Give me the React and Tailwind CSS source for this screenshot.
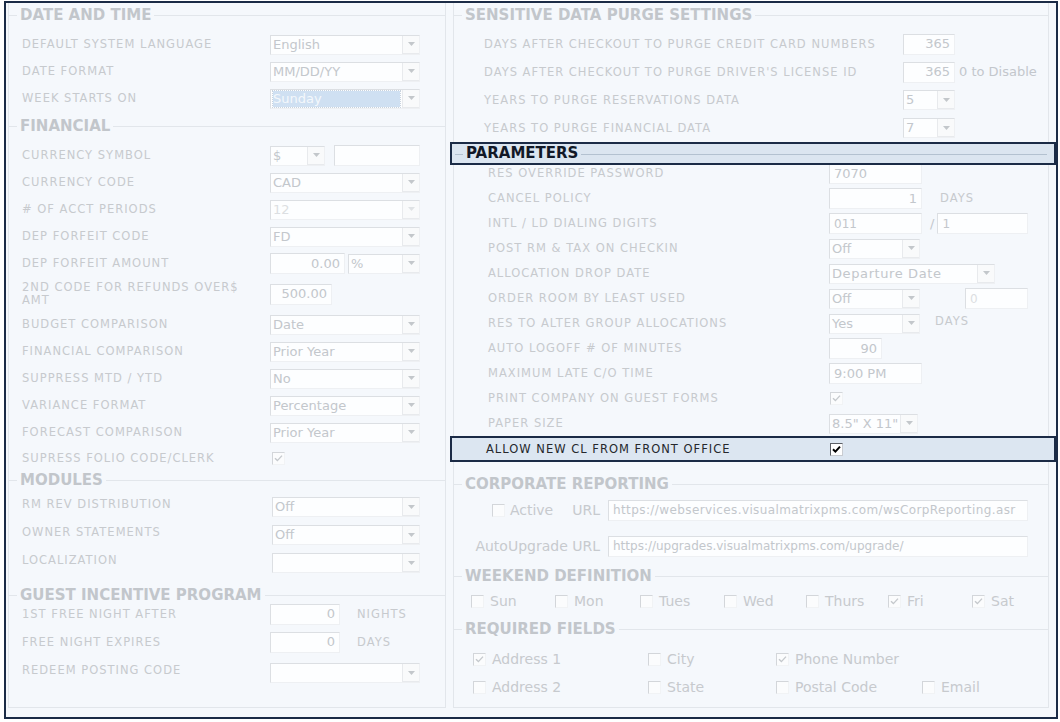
import React from "react";

const LINE = "border-[#e2e6eb]";

function Legend({ title, className = "h-[24px]", dark }) {
  return (
    <div className={`flex ${className}`}>
      <div className={`h-1/2 w-[8px] self-end border-t ${dark ? "border-[#b3c1d0]" : LINE}`} />
      <span
        className={`self-center px-[3px] text-[15px] font-bold leading-none ${
          dark ? "text-[#111827]" : "text-[#c2c6cb]"
        }`}
      >
        {title}
      </span>
      <div className={`h-1/2 flex-1 self-end border-t ${dark ? "border-[#b3c1d0]" : LINE}`} />
    </div>
  );
}

function Label({ children, className = "" }) {
  return (
    <div className={`text-[11.5px] leading-[13px] tracking-[1px] text-[#c7cace] ${className}`}>
      {children}
    </div>
  );
}

function Arrow({ light }) {
  return (
    <svg width="7" height="4" viewBox="0 0 7 4">
      <polygon points="0,0 7,0 3.5,4" fill={light ? "#dfe2e5" : "#c3c7cb"} />
    </svg>
  );
}

function Select({ value, w = "w-[150px]", selected, disabled, wide }) {
  return (
    <div
      className={`${w} flex h-[20px] border border-t-[#dcdfe3] border-l-[#dcdfe3] border-r-[#eef0f3] border-b-[#eef0f3] bg-[#fdfeff]`}
    >
      <div className="flex min-w-0 flex-1 items-center overflow-hidden px-[2px]">
        <span
          className={`whitespace-nowrap text-[13px] leading-[16px] ${wide ? "tracking-[0.6px]" : ""} ${
            selected
              ? "w-full bg-[#cfe0f2] text-[#f4f8fc] outline-1 outline-dotted outline-[#c9d3de]"
              : disabled
              ? "text-[#dcdfe2]"
              : "text-[#c3c7cc]"
          }`}
        >
          {value}
        </span>
      </div>
      <div className="flex w-[17px] shrink-0 items-center justify-center border-b border-l border-[#e8eaed] bg-[#f9fafb]">
        <Arrow light={disabled} />
      </div>
    </div>
  );
}

function Input({ value, w = "w-[93px]", right, disabled, small, wide }) {
  return (
    <div
      className={`${w} flex h-[21px] items-center overflow-hidden border border-t-[#dcdfe3] border-l-[#dcdfe3] border-r-[#eef0f3] border-b-[#eef0f3] bg-[#fdfeff] px-[4px] ${
        right ? "justify-end" : ""
      }`}
    >
      <span
        className={`whitespace-nowrap ${small ? "text-[12px]" : "text-[13px]"} ${
          wide ? "tracking-[0.4px]" : ""
        } leading-[16px] ${disabled ? "text-[#dcdfe2]" : "text-[#c3c7cc]"}`}
      >
        {value}
      </span>
    </div>
  );
}

function Check({ checked, dark }) {
  return (
    <span
      className={`flex h-[13px] w-[13px] shrink-0 items-center justify-center border ${
        dark
          ? "border-t-[#5b5f66] border-l-[#5b5f66] border-r-[#c9ccd1] border-b-[#c9ccd1] bg-white"
          : "border-t-[#d3d6da] border-l-[#d3d6da] border-r-[#f1f3f5] border-b-[#f1f3f5] bg-[#fbfcfd]"
      }`}
    >
      {checked && (
        <svg width="9" height="9" viewBox="0 0 9 9">
          <path
            d="M1 4.2 L3.4 6.6 L8 1.6"
            fill="none"
            stroke={dark ? "#000000" : "#c5c9cd"}
            strokeWidth={dark ? "2" : "1.4"}
          />
        </svg>
      )}
    </span>
  );
}

function Row({ label, children, h = "h-[27px]" }) {
  return (
    <div className={`flex items-center ${h}`}>
      <div className="w-[261px] shrink-0 pl-[13px]">
        <Label>{label}</Label>
      </div>
      <div className="flex items-center">{children}</div>
    </div>
  );
}

function PurgeRow({ label, children }) {
  return (
    <div className="flex h-[28px] items-center">
      <div className="w-[449px] shrink-0 pl-[30px]">
        <Label>{label}</Label>
      </div>
      <div className="flex items-center">{children}</div>
    </div>
  );
}

function ParamRow({ label, children }) {
  return (
    <div className="flex h-[25px] items-center">
      <div className="w-[375px] shrink-0 pl-[34px]">
        <Label>{label}</Label>
      </div>
      <div className="flex items-center">{children}</div>
    </div>
  );
}

function CheckItem({ label, checked, w }) {
  return (
    <div className={`flex items-center gap-[6px] ${w}`}>
      <Check checked={checked} />
      <span className="text-[14px] leading-none text-[#c7cace]">{label}</span>
    </div>
  );
}

function LeftColumn() {
  return (
    <div className={`flex h-[705px] w-[438px] flex-col border-b border-l border-r ${LINE}`}>
      <Legend title="DATE AND TIME" />
      <div className="mt-[4px]">
        <Row label="DEFAULT SYSTEM LANGUAGE">
          <Select value="English" />
        </Row>
        <Row label="DATE FORMAT">
          <Select value="MM/DD/YY" />
        </Row>
        <Row label="WEEK STARTS ON">
          <Select value="Sunday" selected />
        </Row>
      </div>

      <Legend title="FINANCIAL" className="mt-[2px] h-[24px]" />
      <div className="mt-[4px]">
        <Row label="CURRENCY SYMBOL">
          <Select value="$" w="w-[55px]" />
          <div className="ml-[9px]">
            <Input value="" w="w-[86px]" />
          </div>
        </Row>
        <Row label="CURRENCY CODE">
          <Select value="CAD" />
        </Row>
        <Row label="# OF ACCT PERIODS">
          <Select value="12" disabled />
        </Row>
        <Row label="DEP FORFEIT CODE">
          <Select value="FD" />
        </Row>
        <Row label="DEP FORFEIT AMOUNT">
          <Input value="0.00" w="w-[75px]" right />
          <div className="ml-[3px]">
            <Select value="%" w="w-[72px]" />
          </div>
        </Row>
        <Row
          h="h-[34px]"
          label={
            <>
              2ND CODE FOR REFUNDS OVER$
              <br />
              AMT
            </>
          }
        >
          <Input value="500.00" w="w-[62px]" right />
        </Row>
        <Row label="BUDGET COMPARISON">
          <Select value="Date" />
        </Row>
        <Row label="FINANCIAL COMPARISON">
          <Select value="Prior Year" />
        </Row>
        <Row label="SUPPRESS MTD / YTD">
          <Select value="No" />
        </Row>
        <Row label="VARIANCE FORMAT">
          <Select value="Percentage" />
        </Row>
        <Row label="FORECAST COMPARISON">
          <Select value="Prior Year" />
        </Row>
        <Row label="SUPRESS FOLIO CODE/CLERK" h="h-[24px]">
          <div className="ml-[2px]">
            <Check checked />
          </div>
        </Row>
      </div>

      <Legend title="MODULES" className="h-[20px]" />
      <div>
        <Row label="RM REV DISTRIBUTION" h="h-[28px]">
          <div className="ml-[2px] mt-[6px]">
            <Select value="Off" w="w-[148px]" />
          </div>
        </Row>
        <Row label="OWNER STATEMENTS" h="h-[28px]">
          <div className="ml-[2px] mt-[6px]">
            <Select value="Off" w="w-[148px]" />
          </div>
        </Row>
        <Row label="LOCALIZATION" h="h-[28px]">
          <div className="ml-[2px] mt-[6px]">
            <Select value="" w="w-[148px]" />
          </div>
        </Row>
      </div>

      <Legend title="GUEST INCENTIVE PROGRAM" className="mt-[11px] h-[20px]" />
      <div className="-mt-[5px]">
        <Row label="1ST FREE NIGHT AFTER" h="h-[28px]">
          <Input value="0" w="w-[70px]" right />
          <Label className="ml-[17px]">NIGHTS</Label>
        </Row>
        <Row label="FREE NIGHT EXPIRES" h="h-[28px]">
          <Input value="0" w="w-[70px]" right />
          <Label className="ml-[17px]">DAYS</Label>
        </Row>
        <Row label="REDEEM POSTING CODE" h="h-[28px]">
          <div className="mt-[6px]">
            <Select value="" />
          </div>
        </Row>
      </div>
    </div>
  );
}

function RightColumn() {
  return (
    <div className={`flex h-[705px] w-[596px] flex-col border-b border-l border-r ${LINE}`}>
      <Legend title="SENSITIVE DATA PURGE SETTINGS" />
      <div className="mt-[3px]">
        <PurgeRow label="DAYS AFTER CHECKOUT TO PURGE CREDIT CARD NUMBERS">
          <Input value="365" w="w-[52px]" right />
        </PurgeRow>
        <PurgeRow label="DAYS AFTER CHECKOUT TO PURGE DRIVER'S LICENSE ID">
          <Input value="365" w="w-[52px]" right />
          <span className="ml-[4px] text-[13px] text-[#c3c7cc]">0 to Disable</span>
        </PurgeRow>
        <PurgeRow label="YEARS TO PURGE RESERVATIONS DATA">
          <Select value="5" w="w-[52px]" />
        </PurgeRow>
        <PurgeRow label="YEARS TO PURGE FINANCIAL DATA">
          <Select value="7" w="w-[52px]" />
        </PurgeRow>
      </div>

      <div className="relative z-10 -ml-[4px] -mr-[8px] flex h-[23px] items-center border-2 border-[#1b2b46] bg-[#dbe5f0] pl-[3px] pr-[7px]">
        <div className="h-full flex-1">
          <Legend title="PARAMETERS" className="h-full" dark />
        </div>
      </div>

      <div className="-mt-[4px]">
        <ParamRow label="RES OVERRIDE PASSWORD">
          <Input value="7070" />
        </ParamRow>
        <ParamRow label="CANCEL POLICY">
          <Input value="1" right />
          <Label className="ml-[18px]">DAYS</Label>
        </ParamRow>
        <ParamRow label="INTL / LD DIALING DIGITS">
          <Input value="011" small />
          <span className="ml-[8px] text-[13px] text-[#c3c7cc]">/</span>
          <div className="ml-[3px]">
            <Input value="1" w="w-[91px]" small />
          </div>
        </ParamRow>
        <ParamRow label="POST RM & TAX ON CHECKIN">
          <Select value="Off" w="w-[91px]" />
        </ParamRow>
        <ParamRow label="ALLOCATION DROP DATE">
          <Select value="Departure Date" w="w-[166px]" wide />
        </ParamRow>
        <ParamRow label="ORDER ROOM BY LEAST USED">
          <Select value="Off" w="w-[91px]" />
          <div className="ml-[45px]">
            <Input value="0" w="w-[63px]" disabled small />
          </div>
        </ParamRow>
        <ParamRow label="RES TO ALTER GROUP ALLOCATIONS">
          <Select value="Yes" w="w-[91px]" />
          <Label className="-mt-[5px] ml-[15px]">DAYS</Label>
        </ParamRow>
        <ParamRow label="AUTO LOGOFF # OF MINUTES">
          <Input value="90" w="w-[53px]" right />
        </ParamRow>
        <ParamRow label="MAXIMUM  LATE C/O TIME">
          <Input value="9:00 PM" />
        </ParamRow>
        <ParamRow label="PRINT COMPANY ON GUEST FORMS">
          <div className="ml-[1px]">
            <Check checked />
          </div>
        </ParamRow>
        <ParamRow label="PAPER SIZE">
          <Select value={'8.5" X 11"'} w="w-[89px]" />
        </ParamRow>
      </div>

      <div className="-ml-[4px] -mr-[8px] flex h-[26px] items-center border-2 border-[#1b2b46] bg-[#dce6f1]">
        <div className="w-[377px] shrink-0 pl-[34px] text-[11.5px] leading-[13px] tracking-[1px] text-[#26282c]">
          ALLOW NEW CL FROM FRONT OFFICE
        </div>
        <div className="ml-[1px]">
          <Check checked dark />
        </div>
      </div>

      <Legend title="CORPORATE REPORTING" className="mt-[12px] h-[20px]" />
      <div className="flex h-[32px] items-center">
        <div className="flex w-[154px] shrink-0 items-center justify-end gap-[5px] pr-[8px]">
          <Check />
          <span className="text-[14px] text-[#c7cace]">Active</span>
          <span className="ml-[14px] text-[14px] text-[#c7cace]">URL</span>
        </div>
        <Input
          value="https://webservices.visualmatrixpms.com/wsCorpReporting.asr"
          w="w-[420px]"
          small
          wide
        />
      </div>
      <div className="flex h-[40px] items-center">
        <div className="w-[154px] shrink-0 pr-[8px] text-right text-[14px] text-[#c7cace]">
          AutoUpgrade URL
        </div>
        <Input value="https://upgrades.visualmatrixpms.com/upgrade/" w="w-[420px]" small />
      </div>

      <Legend title="WEEKEND DEFINITION" className="h-[20px]" />
      <div className="flex h-[30px] items-center pl-[17px]">
        <CheckItem label="Sun" w="w-[84px]" />
        <CheckItem label="Mon" w="w-[85px]" />
        <CheckItem label="Tues" w="w-[84px]" />
        <CheckItem label="Wed" w="w-[82px]" />
        <CheckItem label="Thurs" w="w-[82px]" />
        <CheckItem label="Fri" checked w="w-[84px]" />
        <CheckItem label="Sat" checked w="w-[60px]" />
      </div>

      <Legend title="REQUIRED FIELDS" className="mt-[3px] h-[20px]" />
      <div className="mt-[6px] pl-[19px]">
        <div className="flex h-[28px] items-center">
          <CheckItem label="Address 1" checked w="w-[175px]" />
          <CheckItem label="City" w="w-[128px]" />
          <CheckItem label="Phone Number" checked w="w-[146px]" />
        </div>
        <div className="flex h-[28px] items-center">
          <CheckItem label="Address 2" w="w-[175px]" />
          <CheckItem label="State" w="w-[128px]" />
          <CheckItem label="Postal Code" w="w-[146px]" />
          <CheckItem label="Email" w="w-[80px]" />
        </div>
      </div>
    </div>
  );
}

export default function App() {
  return (
    <div className="h-[722px] w-[1060px] bg-white pl-[4px] pt-[1px] font-['DejaVu_Sans',sans-serif]">
      <div className="flex h-[718px] w-[1054px] gap-[7px] border-2 border-[#1b2b46] bg-[#f5f8fc] pl-[2px]">
        <LeftColumn />
        <RightColumn />
      </div>
    </div>
  );
}
